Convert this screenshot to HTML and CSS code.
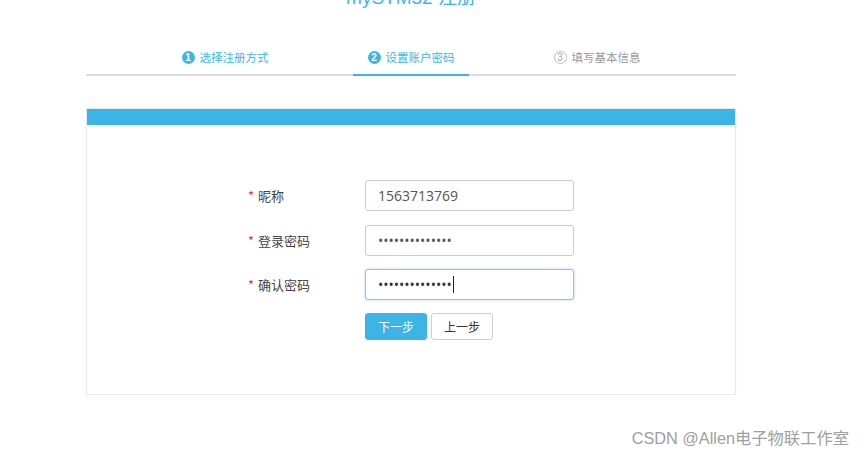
FILE: index.html
```html
<!DOCTYPE html>
<html lang="zh">
<head>
<meta charset="utf-8">
<title>mySTM32 注册</title>
<link rel="stylesheet" href="styles.css">
</head>
<body>
<div class="page">
  <h1 class="title">mySTM32 注册</h1>
  <ul class="steps">
    <li class="step done"><span class="num">1</span>选择注册方式</li>
    <li class="step active"><span class="num">2</span>设置账户密码</li>
    <li class="step todo"><span class="num">3</span>填写基本信息</li>
  </ul>
  <div class="card">
    <div class="card-head"></div>
    <form class="form">
      <div class="row">
        <label class="label"><span class="req">*</span>昵称</label>
        <input class="input" type="text" value="1563713769" readonly>
      </div>
      <div class="row">
        <label class="label"><span class="req">*</span>登录密码</label>
        <input class="input" type="password" value="12345678901234" readonly>
      </div>
      <div class="row">
        <label class="label"><span class="req">*</span>确认密码</label>
        <div class="input focus"><span class="dots">••••••••••••••</span><span class="caret"></span></div>
      </div>
      <div class="row actions">
        <span class="label"></span>
        <button type="button" class="btn primary">下一步</button>
        <button type="button" class="btn">上一步</button>
      </div>
    </form>
  </div>
</div>
<div class="watermark">CSDN @Allen电子物联工作室</div>
</body>
</html>
```
FILE: styles.css
```css
html, body {
  margin: 0;
  padding: 0;
  background: #fff;
  font-family: "Open Sans", "Noto Sans CJK SC", sans-serif;
  overflow: hidden;
}
.page {
  width: 650px;
  margin-left: 86px;
}
.title {
  margin: -14px 0 0;
  height: 54px;
  text-align: center;
  font-size: 19px;
  line-height: 24px;
  font-weight: normal;
  color: #3db5e6;
  font-family: "Liberation Sans", "Noto Sans CJK SC", sans-serif;
}
.steps {
  list-style: none;
  margin: 0;
  padding: 0;
  display: flex;
  justify-content: center;
  gap: 70px;
  border-bottom: 2px solid #dcdcdc;
  height: 34px;
}
.step {
  width: 116px;
  display: flex;
  align-items: center;
  justify-content: center;
  font-size: 11.5px;
  color: #3db5e6;
  font-family: "Noto Sans CJK SC", sans-serif;
  height: 34px;
}
.step .num {
  width: 13px;
  height: 13px;
  border-radius: 50%;
  background: #3db5e6;
  color: #fff;
  font-size: 10px;
  font-weight: bold;
  line-height: 13px;
  text-align: center;
  margin-right: 5px;
  font-family: "Liberation Sans", sans-serif;
  box-sizing: border-box;
}
.step.active {
  border-bottom: 2px solid #3db5e6;
  margin-bottom: -2px;
}
.step.todo {
  color: #9a9a9a;
}
.step.todo .num {
  background: #fff;
  border: 1px solid #bbb;
  color: #aaa;
  font-weight: normal;
  line-height: 11px;
}
.card {
  margin-top: 32px;
  border: 1px solid #e9e9e9;
  box-shadow: 0 1px 2px rgba(0,0,0,0.05);
}
.card-head {
  height: 16px;
  background: #3cb4e5;
}
.form {
  width: 326px;
  margin: 0 auto;
  padding: 55px 0 54px;
}
.row {
  display: flex;
  align-items: center;
  margin-bottom: 14px;
}
.row:nth-child(3) {
  margin-top: -1px;
}
.row.actions {
  margin-bottom: 0;
  margin-top: -1px;
}
.label {
  width: 117px;
  flex: none;
  font-size: 13px;
  color: #444;
  font-family: "Noto Sans CJK SC", sans-serif;
}
.req {
  color: #e4393c;
  margin-right: 4px;
}
.input {
  width: 209px;
  height: 31px;
  box-sizing: border-box;
  border: 1px solid #cccccc;
  border-radius: 3px;
  padding: 0 12px;
  font-size: 14px;
  color: #555;
  font-family: "Open Sans", sans-serif;
  outline: none;
  background: #fff;
}
.input.focus {
  display: flex;
  align-items: center;
  border-color: #8cc3ee;
  box-shadow: 0 0 3px rgba(102,175,233,0.5);
}
.dots {
  font-size: 14px;
  color: #333;
}
.caret {
  width: 1px;
  height: 17px;
  background: #222;
  margin-left: 1px;
}
.btn {
  height: 27px;
  width: 62px;
  border: 1px solid #cfcfcf;
  border-radius: 3px;
  background: #fff;
  color: #333;
  font-size: 12px;
  font-family: "Noto Sans CJK SC", sans-serif;
  padding: 0;
  margin-right: 4px;
  cursor: pointer;
}
.btn.primary {
  background: #3cb4e5;
  border-color: #3cb4e5;
  color: #fff;
}
.watermark {
  position: absolute;
  right: 16px;
  bottom: 10px;
  font-size: 16.3px;
  color: #a0a0a0;
  font-family: "Liberation Sans", "Noto Sans CJK SC", sans-serif;
}
```
